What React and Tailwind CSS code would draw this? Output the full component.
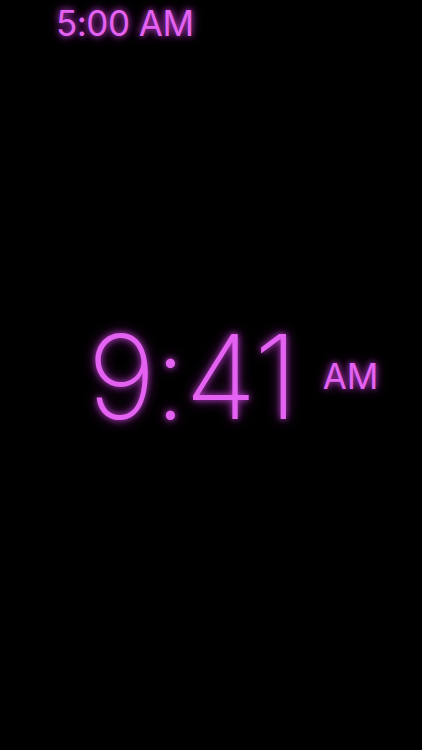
export default function App() {
  return (
    <div className="w-[422px] h-[750px] bg-black flex flex-col overflow-hidden text-[#e462f2] [font-family:Inter,'Liberation_Sans',sans-serif]">
      <div className="pl-[56px] pt-[2px] text-[35px] leading-[42px] font-normal tracking-[-0.5px] [text-shadow:0_0_6px_#b83cc8,0_0_12px_#7a1f86]">
        5:00 AM
      </div>
      <div className="flex-1 flex items-center justify-center pb-[42px]">
        <div className="flex items-center pl-[44px]">
          <span className="text-[117px] leading-none font-extralight tracking-[-1.5px] [text-shadow:0_0_6px_#b83cc8,0_0_14px_#7a1f86]">
            9:41
          </span>
          <span className="ml-[26px] text-[35px] leading-none font-normal [text-shadow:0_0_6px_#b83cc8,0_0_12px_#7a1f86]">
            AM
          </span>
        </div>
      </div>
    </div>
  );
}
